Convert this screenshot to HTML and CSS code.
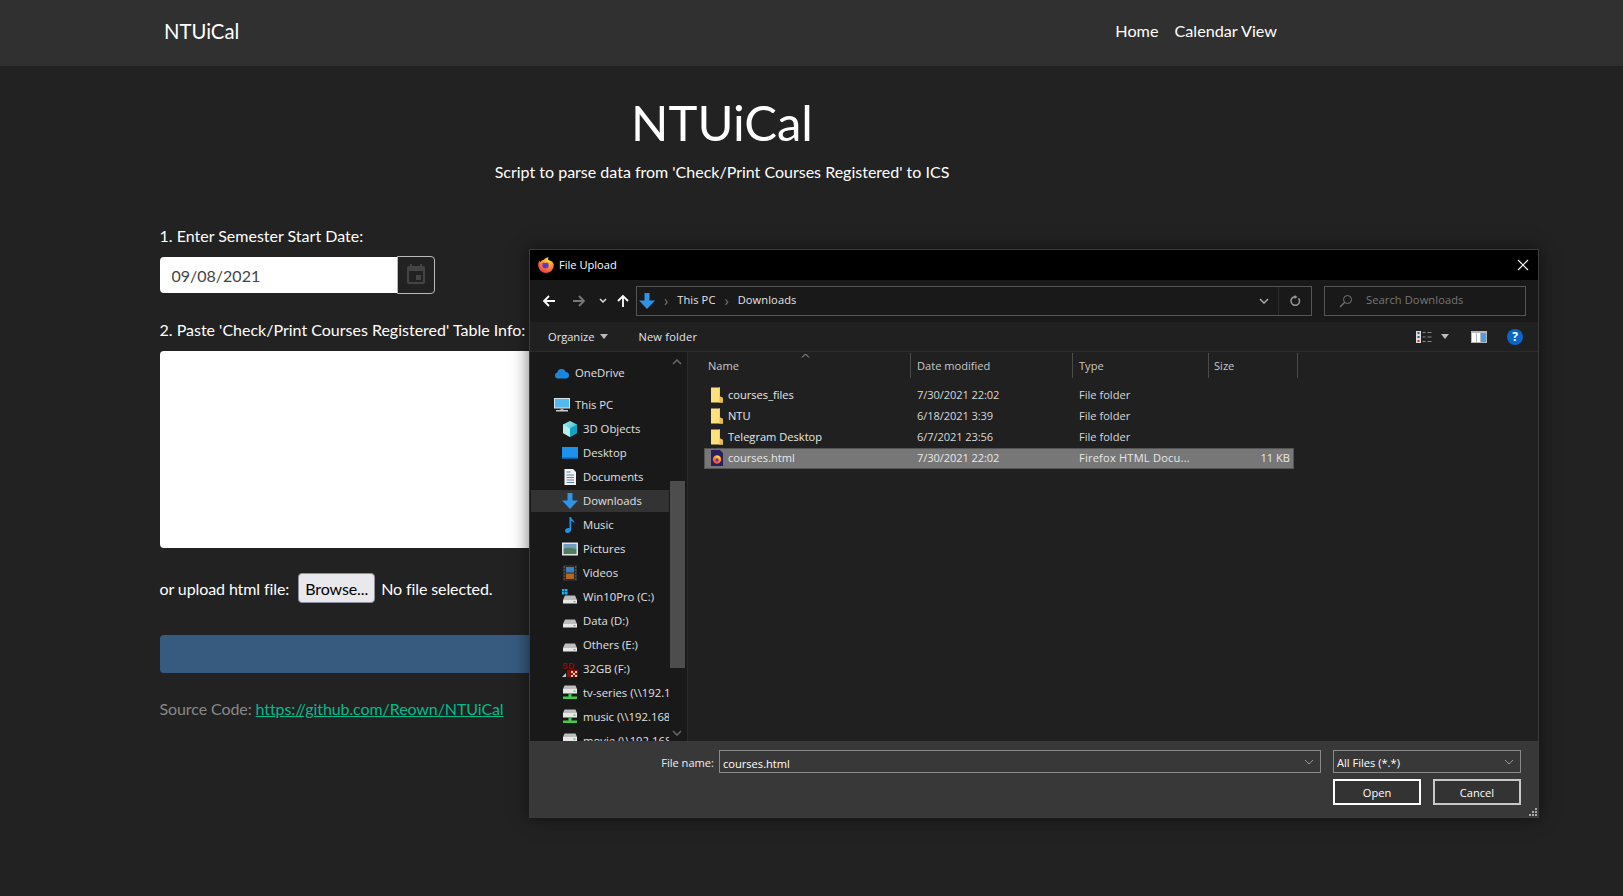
FILE: index.html
```html
<!DOCTYPE html>
<html lang="en">
<head>
<meta charset="utf-8">
<title>NTUiCal</title>
<link rel="stylesheet" href="styles.css">
</head>
<body>
<svg class="sprite" aria-hidden="true">
  <defs>
    <radialGradient id="fxg" cx="0.65" cy="0.2" r="0.95"><stop offset="0" stop-color="#ffe03a"/><stop offset="0.45" stop-color="#ff9028"/><stop offset="1" stop-color="#e8265e"/></radialGradient>
    <linearGradient id="cube" x1="0" y1="0" x2="1" y2="1"><stop offset="0" stop-color="#a8f0f0"/><stop offset="1" stop-color="#18a8c8"/></linearGradient>
    <symbol id="i-fx" viewBox="0 0 16 16">
      <path d="M8 16A7.800 7.800 0 0 1 .2 8.200C.2 6.400.8 4.800 1.700 3.600l.5 1.500C3.200 3.600 4.400 2.900 5.700 2.700 7 1.400 8.800.400 10.700 0 10 1 9.900 2.100 10.400 3c3 .7 5.400 2.500 5.400 5.200A7.800 7.800 0 0 1 8 16z" fill="url(#fxg)"/>
      <circle cx="7.500" cy="8.300" r="3.200" fill="#7b33c4"/>
      <circle cx="7.500" cy="8.800" r="1.600" fill="#4f3bd0"/>
      <path d="M4.800 5.800c1.700-1.300 4.200-1.100 5.500.5-1.100-.4-3.300-.6-5.500-.5z" fill="#ffc23a"/>
    </symbol>
    <symbol id="i-folder" viewBox="0 0 14 16">
      <path d="M1 .5h9v9l3 1.500v4.500H1z" fill="#ffe07e"/>
      <path d="M10 9.500 13 11v4.500h-3z" fill="#e8bc4e"/>
      <path d="M9 .5h1v15H9z" fill="#f5cf63"/>
    </symbol>
    <symbol id="i-dl" viewBox="0 0 16 16">
      <path d="M5.500 0h5v7.500H16L8 16 0 7.500h5.500z" fill="#2f93e6"/>
    </symbol>
    <symbol id="i-drive" viewBox="0 0 16 16">
      <path d="M3 6.500h10l2 4.500H1z" fill="#bdbdbd"/>
      <path d="M1 11h14v3.500H1z" fill="#e8e8e8"/>
      <path d="M11.500 12h2v1.200h-2z" fill="#36c24a"/>
    </symbol>
    <symbol id="i-net" viewBox="0 0 16 16">
      <path d="M2.500 .5h11l1.500 3.500H1z" fill="#bdbdbd"/>
      <path d="M1 4h14v4.500H1z" fill="#e8e8e8"/>
      <path d="M11.500 5.500h2v1.200h-2z" fill="#36c24a"/>
      <path d="M6.500 8.500h3v3H15v2.500H1v-2.500h5.500z" fill="#46c94f"/>
    </symbol>
  </defs>
</svg>

<header class="navbar">
  <a class="brand">NTUiCal</a>
  <nav class="nav-links"><a>Home</a><a>Calendar View</a></nav>
</header>

<main class="page">
  <h1 class="title">NTUiCal</h1>
  <p class="lead">Script to parse data from 'Check/Print Courses Registered' to ICS</p>

  <label class="field-label first">1. Enter Semester Start Date:</label>
  <div class="date-group">
    <input class="date-input" type="text" value="09/08/2021">
    <span class="date-btn">
      <svg viewBox="0 0 24 24" width="24" height="24"><path fill="#444" d="M17 12h-5v5h5v-5zM16 1v2H8V1H6v2H5c-1.110 0-1.990.9-1.990 2L3 19c0 1.100.89 2 2 2h14c1.100 0 2-.9 2-2V5c0-1.100-.9-2-2-2h-1V1h-2zm3 18H5V8h14v11z"/></svg>
    </span>
  </div>

  <label class="field-label second">2. Paste 'Check/Print Courses Registered' Table Info:</label>
  <textarea class="table-input"></textarea>

  <div class="file-row">
    <span>or upload html file:</span>
    <button class="browse" type="button">Browse...</button>
    <span>No file selected.</span>
  </div>

  <button class="submit" type="button"></button>

  <p class="source">Source Code: <a href="#">https://github.com/Reown/NTUiCal</a></p>
</main>

<section class="dialog">
  <div class="dlg-title">
    <svg class="ic16"><use href="#i-fx"/></svg>
    <span class="title-text">File Upload</span>
    <svg class="dlg-close" viewBox="0 0 12 12" width="12" height="12"><path d="M1 1l10 10M11 1 1 11" stroke="#fff" stroke-width="1.100" fill="none"/></svg>
  </div>

  <div class="dlg-address">
    <svg class="nav-arrow" viewBox="0 0 14 14" width="14" height="14"><path d="M13 7H2M7 2 2 7l5 5" stroke="#fff" stroke-width="1.800" fill="none"/></svg>
    <svg class="nav-arrow forward" viewBox="0 0 14 14" width="14" height="14"><path d="M1 7h11M7 2l5 5-5 5" stroke="#777" stroke-width="1.800" fill="none"/></svg>
    <svg class="nav-chev" viewBox="0 0 8 6" width="8" height="6"><path d="M1 1l3 3 3-3" stroke="#ddd" stroke-width="1.500" fill="none"/></svg>
    <svg class="nav-arrow up" viewBox="0 0 14 14" width="14" height="14"><path d="M7 13V2M2 7l5-5 5 5" stroke="#fff" stroke-width="1.800" fill="none"/></svg>
    <div class="addr-box">
      <svg class="ic16"><use href="#i-dl"/></svg>
      <span class="crumb-sep">›</span><span class="addr-text">This PC</span><span class="crumb-sep">›</span><span class="addr-text">Downloads</span>
      <svg class="addr-drop" viewBox="0 0 10 6" width="10" height="6"><path d="M1 1l4 4 4-4" stroke="#aaa" stroke-width="1.500" fill="none"/></svg>
      <span class="addr-refresh">
        <svg viewBox="0 0 12 12" width="12" height="12"><path d="M9.500 3.200A4.300 4.300 0 1 1 6 1.700" stroke="#999" stroke-width="1.500" fill="none"/><path d="M5.500 0v4L8.500 2z" fill="#999"/></svg>
      </span>
    </div>
    <div class="search-box">
      <svg viewBox="0 0 14 14" width="14" height="14"><circle cx="8.500" cy="5.500" r="4" stroke="#777" fill="none"/><path d="M5.500 8.500 1 13" stroke="#777" stroke-width="1.200"/></svg>
      <span class="addr-text">Search Downloads</span>
    </div>
  </div>

  <div class="dlg-toolbar">
    <span>Organize</span><i class="caret"></i>
    <span class="new-folder">New folder</span>
    <svg class="view-ic" viewBox="0 0 16 12" width="16" height="12">
      <path d="M0 0h5v12H0z" fill="#ddd"/><path d="M1.500 1h2v2h-2zM1.500 5h2v2h-2z" fill="#357"/><path d="M1.500 9h2v2h-2z" fill="#c33"/>
      <path d="M6.500 1.500h3M11.500 1.500h4M6.500 6h3M11.500 6h4M6.500 10.500h3M11.500 10.500h4" stroke="#888"/>
    </svg>
    <i class="caret view-caret"></i>
    <svg class="pane-ic" viewBox="0 0 16 12" width="16" height="12"><path d="M0 0h16v12H0z" fill="#b8b8b8"/><path d="M1 2h4v9H1zM6 2h3v9H6z" fill="#fff"/><path d="M10 2h5v9h-5z" fill="#4a9ee6"/></svg>
    <span class="help-ic">?</span>
  </div>

  <div class="dlg-body">
    <aside class="tree">
      <ul class="tree-list">
        <li class="tree-item root gap"><svg class="ic16" viewBox="0 0 16 16"><path d="M3.500 13.500A3 3 0 0 1 3.200 7.600 4.500 4.500 0 0 1 11.800 7 3.300 3.300 0 0 1 12.500 13.500z" fill="#1b87dc"/></svg><span>OneDrive</span></li>
        <li class="tree-item root"><svg class="ic16" viewBox="0 0 16 16"><path d="M0 1h16v10.500H0z" fill="#d8e4ec"/><path d="M1 2h14v8.500H1z" fill="#52b8ee"/><path d="M6.500 11.500h3V13h-3z" fill="#aaa"/><path d="M2 13h12v1.500H2z" fill="#ccc"/></svg><span>This PC</span></li>
        <li class="tree-item"><svg class="ic16" viewBox="0 0 16 16"><path d="M8 0l7 3.500v8.500L8 16 1 12V3.500z" fill="url(#cube)"/><path d="M8 7.500V16L1 12V3.500z" fill="#b6f0ee"/><path d="M8 7.500 15 3.500v8.500L8 16z" fill="#14a0c4"/></svg><span>3D Objects</span></li>
        <li class="tree-item"><svg class="ic16" viewBox="0 0 16 16"><path d="M0 2h16v11H0z" fill="#1c92ea"/><path d="M0 12.500h16V14H0z" fill="#0c5fa6"/></svg><span>Desktop</span></li>
        <li class="tree-item"><svg class="ic16" viewBox="0 0 16 16"><path d="M2.500 0h8.500l3 3v13H2.500z" fill="#f4f4f4"/><path d="M4.500 3h4M4.500 6h7.500M4.500 8.500h7.500M4.500 11h7.500M4.500 13.500h7.500" stroke="#5a7fa8"/></svg><span>Documents</span></li>
        <li class="tree-item active"><svg class="ic16"><use href="#i-dl"/></svg><span>Downloads</span></li>
        <li class="tree-item"><svg class="ic16" viewBox="0 0 16 16"><path d="M7.500 0h1.500c.3 2.500 3.500 3 3.500 6.500-.8-1.500-2-2.200-3.300-2.500v8.500C9.200 14.800 7.200 16 5.500 16 3.800 16 3 15 3 13.800c0-1.500 1.700-2.800 3.300-2.800.5 0 .9.100 1.200.3z" fill="#1e96e8"/></svg><span>Music</span></li>
        <li class="tree-item"><svg class="ic16" viewBox="0 0 16 16"><path d="M0 1.500h16v13H0z" fill="#e4e4e4"/><path d="M1.500 3h13v5H1.500z" fill="#6f9fc0"/><path d="M1.500 8c4-2 8-1 13 0v5h-13z" fill="#4f7f5f"/></svg><span>Pictures</span></li>
        <li class="tree-item"><svg class="ic16" viewBox="0 0 16 16"><path d="M1 0h14v16H1z" fill="#2a2a2a"/><path d="M4 2h8v5.500H4z" fill="#3f7fc0"/><path d="M4 8.500h8V14H4z" fill="#b5651d"/><path d="M1.700 1.500h1v1h-1zM1.700 4.500h1v1h-1zM1.700 7.500h1v1h-1zM1.700 10.500h1v1h-1zM1.700 13.500h1v1h-1zM13.300 1.500h1v1h-1zM13.300 4.500h1v1h-1zM13.300 7.500h1v1h-1zM13.300 10.500h1v1h-1zM13.300 13.500h1v1h-1z" fill="#999"/></svg><span>Videos</span></li>
        <li class="tree-item"><svg class="ic16" viewBox="0 0 16 16"><use href="#i-drive"/><path d="M0 0h2.500v2.500H0zM3 0h2.500v2.500H3zM0 3h2.500v2.500H0zM3 3h2.500v2.500H3z" fill="#18b4f0"/></svg><span>Win10Pro (C:)</span></li>
        <li class="tree-item"><svg class="ic16"><use href="#i-drive"/></svg><span>Data (D:)</span></li>
        <li class="tree-item"><svg class="ic16"><use href="#i-drive"/></svg><span>Others (E:)</span></li>
        <li class="tree-item"><svg class="ic16" viewBox="0 0 16 16"><text class="sd-mark" x="0" y="8">SD</text><path d="M5 9h11v7H5z" fill="#8a1010"/><path d="M9 10h2v2H9zM13 10h2v2h-2zM11 12h2v2h-2zM9 14h2v2H9zM13 14h2v2h-2z" fill="#f0c8a0"/><path d="M0 16l4-4v4z" fill="#ccc"/></svg><span>32GB (F:)</span></li>
        <li class="tree-item"><svg class="ic16"><use href="#i-net"/></svg><span>tv-series (\\192.168.1.10)</span></li>
        <li class="tree-item"><svg class="ic16"><use href="#i-net"/></svg><span>music (\\192.168.1.10)</span></li>
        <li class="tree-item"><svg class="ic16"><use href="#i-net"/></svg><span>movie (\\192.168.1.10)</span></li>
      </ul>
      <div class="scrollbar">
        <svg class="sb-up" viewBox="0 0 10 6" width="10" height="6"><path d="M1 5l4-4 4 4" stroke="#666" stroke-width="1.600" fill="none"/></svg>
        <div class="sb-thumb"></div>
        <svg class="sb-down" viewBox="0 0 10 6" width="10" height="6"><path d="M1 1l4 4 4-4" stroke="#666" stroke-width="1.600" fill="none"/></svg>
      </div>
    </aside>
    <div class="files">
      <div class="file-head">
        <span class="head-cell first-cell">Name</span>
        <span class="head-cell">Date modified</span>
        <span class="head-cell">Type</span>
        <span class="head-cell last-cell">Size</span>
        <svg class="sort-caret" viewBox="0 0 9 5" width="9" height="5"><path d="M1 4.500l3.500-3.500L8 4.500" stroke="#aaa" fill="none"/></svg>
      </div>
      <div class="file-row-d"><span class="name-cell"><svg class="ic14"><use href="#i-folder"/></svg>courses_files</span><span>7/30/2021 22:02</span><span>File folder</span><span></span></div>
      <div class="file-row-d"><span class="name-cell"><svg class="ic14"><use href="#i-folder"/></svg>NTU</span><span>6/18/2021 3:39</span><span>File folder</span><span></span></div>
      <div class="file-row-d"><span class="name-cell"><svg class="ic14"><use href="#i-folder"/></svg>Telegram Desktop</span><span>6/7/2021 23:56</span><span>File folder</span><span></span></div>
      <div class="file-row-d selected"><span class="name-cell"><svg class="ic14" viewBox="0 0 14 16"><path d="M1 0h9l3 3v13H1z" fill="#2a1f5e"/><circle cx="7" cy="9.500" r="4.200" fill="url(#fxg)"/><circle cx="7" cy="10" r="1.700" fill="#6a2fb5"/></svg>courses.html</span><span>7/30/2021 22:02</span><span>Firefox HTML Docu...</span><span class="size-cell">11 KB</span></div>
    </div>
  </div>

  <div class="dlg-footer">
    <div class="foot-line">
      <span class="foot-label">File name:</span>
      <div class="name-combo"><span class="combo-text">courses.html</span><svg viewBox="0 0 10 6" width="10" height="6"><path d="M1 1l4 4 4-4" stroke="#999" fill="none"/></svg></div>
      <div class="type-combo"><span class="type-text">All Files (*.*)</span><svg viewBox="0 0 10 6" width="10" height="6"><path d="M1 1l4 4 4-4" stroke="#999" fill="none"/></svg></div>
    </div>
    <div class="foot-buttons">
      <button class="dlg-btn primary" type="button">Open</button>
      <button class="dlg-btn" type="button">Cancel</button>
    </div>
    <svg class="grip" viewBox="0 0 9 9" width="9" height="9"><path d="M7 1h2v2H7zM4 4h2v2H4zM7 4h2v2H7zM1 7h2v2H1zM4 7h2v2H4zM7 7h2v2H7z" fill="#aaa"/></svg>
  </div>
</section>
</body>
</html>
```
FILE: styles.css
```css
* { box-sizing: border-box; }
html, body { height: 100%; }
body {
  margin: 0;
  background: #222;
  color: #fff;
  font-family: Lato, "Liberation Sans", sans-serif;
  font-size: 16px;
  overflow: hidden;
  position: relative;
}
.sprite { position: absolute; width: 0; height: 0; }

.navbar {
  height: 66px;
  background: #303030;
  display: flex;
  align-items: center;
  justify-content: space-between;
  padding: 0 346px 4px 164px;
}
.brand { font-size: 20.3px; color: #fff; }
.nav-links { display: flex; gap: 16px; margin-bottom: 2px; }
.nav-links a { color: #fff; font-size: 16.2px; }

.page { margin-left: 159.5px; width: 1125px; }
.title { margin: 27px 0 0; font-size: 49px; font-weight: 400; line-height: 58px; text-align: center; }
.lead { margin: 9px 0 0; text-align: center; line-height: 24px; }
.field-label { display: block; line-height: 24px; }
.field-label.first { margin-top: 40px; }
.field-label.second { margin-top: 25px; }

.date-group { display: flex; width: 275.5px; height: 36px; margin-top: 9px; }
.date-input {
  width: 237px;
  height: 36px;
  border: 0;
  border-radius: 4px 0 0 4px;
  padding: 0 12px;
  font: 16px Lato, sans-serif;
  color: #444;
  background: #fff;
}
.date-btn {
  flex: 1;
  margin: -1px 0;
  border: 1px solid #bbb;
  border-radius: 0 4px 4px 0;
  display: flex;
  align-items: center;
  justify-content: center;
}
.table-input {
  display: block;
  width: 100%;
  height: 197px;
  margin-top: 9px;
  border: 0;
  border-radius: 4px;
  background: #fff;
  resize: none;
}
.file-row { display: flex; align-items: center; height: 30px; margin-top: 25px; letter-spacing: -.1px; }
.browse {
  height: 30px;
  width: 77px;
  margin: 0 6px 0 9px;
  padding: 0;
  background: #e9e9ed;
  border: 1px solid #8f8f9d;
  border-radius: 4px;
  font: 16px Lato, sans-serif;
  letter-spacing: -.1px;
  color: #000;
}
.submit {
  display: block;
  width: 100%;
  height: 38px;
  margin-top: 32px;
  background: #375a7f;
  border: 0;
  border-radius: 4px;
}
.source { margin: 24px 0 0; color: #888; line-height: 24px; letter-spacing: -.09px; }
.source a { color: #00bc8c; }

/* File dialog window */
.dialog {
  position: absolute;
  left: 529px;
  top: 249px;
  width: 1010px;
  height: 569px;
  border: 1px solid #3c3c3c;
  background: #202020;
  box-shadow: 0 0 16px rgba(0, 0, 0, .55);
  display: flex;
  flex-direction: column;
  font-family: "Open Sans", sans-serif;
  font-size: 11.1px;
  color: #e4e4e4;
}
.ic16 { width: 16px; height: 16px; flex: none; }
.ic14 { width: 14px; height: 16px; flex: none; }

.dlg-title { height: 30px; background: #000; color: #fff; display: flex; align-items: center; padding: 0 9px 0 8px; gap: 5px; }
.title-text { margin-bottom: 2px; }
.dlg-close { margin-left: auto; }

.dlg-address { height: 42px; background: #191919; display: flex; align-items: center; padding-left: 12px; }
.nav-arrow.forward { margin-left: 16px; }
.nav-chev { margin-left: 13px; }
.nav-arrow.up { margin-left: 9px; }
.addr-box {
  width: 676px;
  height: 30px;
  margin-left: 6px;
  border: 1px solid #555;
  display: flex;
  align-items: center;
  padding-left: 2px;
}
.addr-text { margin-bottom: 3px; letter-spacing: .1px; }
.crumb-sep { margin: 0 9px; color: #777; font-size: 14px; line-height: 14px; }
.addr-drop { margin-left: auto; margin-right: 9px; }
.addr-refresh { width: 33px; height: 100%; border-left: 1px solid #2c2c2c; display: flex; align-items: center; justify-content: center; }
.search-box {
  width: 202px;
  height: 30px;
  margin-left: 12px;
  border: 1px solid #555;
  display: flex;
  align-items: center;
  gap: 13px;
  padding-left: 14px;
  color: #777;
}

.dlg-toolbar { height: 30px; background: #202020; border-bottom: 1px solid #2b2b2b; display: flex; align-items: center; padding-left: 18px; }
.caret { width: 0; height: 0; border: 4px solid transparent; border-top: 5px solid #bbb; border-bottom: 0; margin-left: 6px; }
.new-folder { margin-left: 30px; letter-spacing: .2px; }
.view-ic { margin-left: auto; }
.caret.view-caret { margin-left: 9px; }
.pane-ic { margin-left: 22px; }
.help-ic {
  width: 16px;
  height: 16px;
  margin: 0 15px 0 20px;
  border-radius: 50%;
  background: #0a66c8;
  color: #fff;
  font: 700 12px/16px "Open Sans", sans-serif;
  text-align: center;
}

.dlg-body { flex: 1; min-height: 0; display: flex; }
.tree { width: 158px; background: #191919; border-right: 1px solid #2a2a2a; display: flex; overflow: hidden; }
.tree-list { list-style: none; margin: 0; padding: 10px 0 0 1px; width: 139px; overflow: hidden; flex: none; font-size: 11.3px; }
.tree-item { height: 22px; margin-bottom: 2px; display: flex; align-items: center; gap: 5px; padding-left: 31px; white-space: nowrap; color: #e0e0e0; }
.tree-item span { margin-bottom: 2px; }
.tree-item.root { padding-left: 23px; }
.tree-item.gap { margin-bottom: 10px; }
.tree-item.active { background: #333; }
.sd-mark { font: 700 9px "Liberation Sans", sans-serif; fill: #8a0c0c; }
.scrollbar { position: relative; flex: 1; }
.sb-thumb { width: 15px; height: 187px; margin: 129px 0 0 1px; background: #4d4d4d; }
.sb-up { position: absolute; left: 3px; top: 7px; }
.sb-down { position: absolute; left: 3px; top: 378px; }

.files { flex: 1; padding: 1px 0 0 16px; }
.file-head { position: relative; display: grid; grid-template-columns: 207px 162px 136px 89px; height: 25px; margin-bottom: 7px; color: #c8c8c8; }
.head-cell { border-right: 1px solid #4a4a4a; padding-left: 6px; line-height: 25px; }
.head-cell.first-cell { padding-left: 4px; }
.head-cell.last-cell { padding-left: 5px; }
.sort-caret { position: absolute; left: 97px; top: 0; }
.file-row-d { display: grid; grid-template-columns: 213px 162px 135px 80px; width: 590px; height: 21px; align-items: center; color: #d8d8d8; border: 1px solid transparent; }
.file-row-d > span { white-space: nowrap; margin: 0 0 2px -1px; }
.file-row-d > span:nth-child(2) { letter-spacing: -.1px; }
.file-row-d.selected { background: #777; border-color: #555; color: #e8e8e8; }
.file-row-d.selected > span:nth-child(3) { letter-spacing: .2px; }
.name-cell { display: flex; align-items: center; gap: 4px; padding-left: 6px; color: #e8e8e8; }
.size-cell { text-align: right; padding-right: 5px; }

.dlg-footer { position: relative; height: 76px; background: #383838; padding: 9px 17px 0 0; }
.foot-line { display: flex; align-items: center; height: 23px; }
.foot-label { width: 189px; text-align: right; padding: 2px 5px 0 0; color: #eee; }
.name-combo, .type-combo { height: 23px; border: 1px solid #8a8a8a; display: flex; align-items: center; justify-content: space-between; padding: 0 6px 0 3px; color: #fff; }
.combo-text { margin-top: 3px; }
.type-text { margin-top: 1px; }
.name-combo { width: 602px; }
.type-combo { width: 188px; margin-left: 12px; }
.foot-buttons { display: flex; justify-content: flex-end; gap: 12px; margin-top: 6px; }
.dlg-btn { width: 88px; height: 26px; background: #333; border: 2px solid #c8c8c8; color: #fff; font: inherit; padding: 0; }
.dlg-btn.primary { border-color: #fff; }
.grip { position: absolute; right: 1px; bottom: 1px; }
```
